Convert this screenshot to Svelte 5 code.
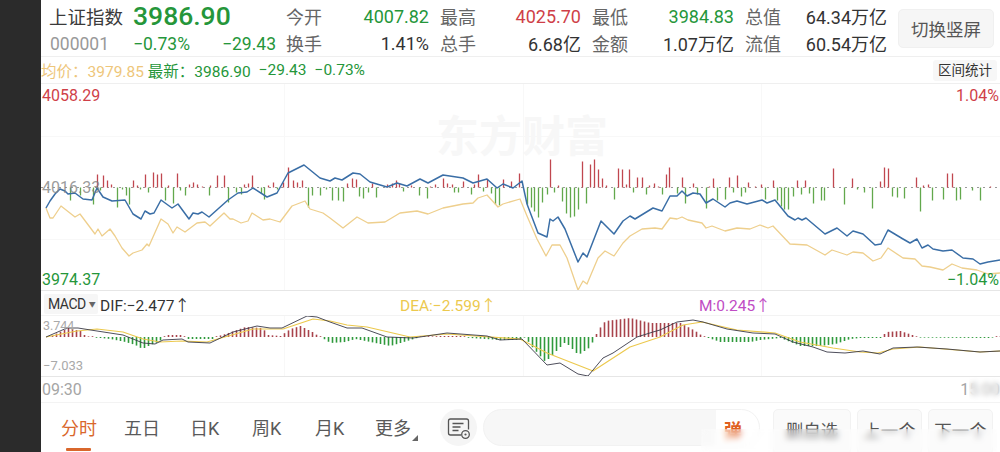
<script>
  // Index intraday screen: quote header, price/volume pane, MACD pane, bottom tabs.
  // Chart coordinates are page pixels; each svg viewBox maps them onto its pane.
  const stats = [
    ['今开', '4007.82', 'down', '最高', '4025.70', 'up', '最低', '3984.83', 'down', '总值', '64.34万亿', ''],
    ['换手', '1.41%', '', '总手', '6.68亿', '', '金额', '1.07万亿', '', '流值', '60.54万亿', '']
  ];

  const tabs = ['分时', '五日', '日K', '周K', '月K'];

  const priceLine = '46,207 50,200 55,193 60,188 65,190 68,193 75,192 83,198 92,199 97,187 103,196 112,200 125,199 133,213 141,218 145,210 150,213 154,212 161,199 172,207 178,203 189,218 193,212 198,213 202,211 209,216 228,199 238,192 247,191 253,187 267,196 277,192 288,172 304,164 320,177 330,180 335,177 342,179 353,172 360,173 370,181 387,186 397,182 407,185 420,178 428,182 443,174 463,177 473,182 487,178 497,187 503,183 513,187 522,180 527,203 538,232 547,236 550,218 553,220 558,216 565,228 578,261 583,252 587,256 601,220 614,233 623,220 630,215 635,218 653,207 662,210 670,195 677,195 682,190 687,195 693,192 700,193 706,202 713,198 725,206 730,202 737,200 747,203 762,199 767,202 775,199 788,215 795,219 798,217 802,219 806,217 825,233 837,227 847,235 853,230 863,233 875,244 881,243 888,229 903,238 910,242 917,238 922,247 928,244 933,248 943,250 952,249 963,257 973,258 980,263 988,261 1000,259';
  const avgLine = '46,207 50,217 53,217 61,205 75,216 80,213 95,233 98,228 102,235 110,228 115,235 122,247 129,255 133,252 142,249 147,243 149,245 161,218 168,223 173,232 177,226 185,231 197,222 205,221 210,225 224,212 230,218 233,218 241,222 248,220 252,212 263,219 270,218 280,221 292,205 305,200 310,208 323,212 330,217 343,227 357,216 368,222 385,221 400,212 417,210 428,213 443,207 463,203 473,202 478,197 487,194 498,206 503,203 520,198 527,215 537,238 546,255 552,244 560,244 567,257 578,289 583,280 587,283 598,257 605,250 614,255 623,242 630,235 642,228 655,227 662,228 670,217 677,218 682,216 688,219 702,222 706,227 712,225 725,230 737,227 750,228 760,224 768,227 773,225 790,243 807,244 825,254 832,249 847,254 853,251 863,252 873,260 881,257 888,247 903,257 915,258 922,265 930,266 943,269 952,263 962,267 977,269 988,273 1000,272';

  // [x, height]: positive bars are red and rise from the base line, negative are green.
  const volume = [[97,13],[103,12],[107,7],[111,3],[133,7],[137,2],[145,13],[153,15],[157,13],[161,14],[168,2],[177,14],[189,3],[193,5],[197,3],[202,1],[210,2],[217,12],[224,12],[244,3],[248,4],[252,12],[268,2],[273,5],[283,5],[288,20],[293,7],[297,5],[302,7],[70,-13],[80,-8],[93,-17],[100,-3],[117,-20],[122,-2],[126,-8],[129,-17],[140,-2],[148,-5],[165,-13],[173,-16],[180,-3],[185,-8],[209,-8],[228,-15],[236,-5],[241,-7],[261,-6],[264,-12],[277,-2],[308,-20],[312,-8],[320,-8],[326,-2],[332,-13],[338,-13],[347,4],[352,9],[356,8],[372,4],[387,3],[392,4],[396,7],[399,4],[411,2],[430,1],[435,3],[443,9],[447,4],[452,3],[463,6],[474,3],[478,13],[487,8],[503,8],[511,6],[519,14],[550,28],[558,2],[582,26],[590,23],[594,28],[598,18],[602,9],[606,2],[618,19],[622,18],[626,3],[629,18],[637,10],[642,10],[649,2],[654,4],[658,1],[666,13],[669,20],[343,-14],[359,-9],[363,-11],[368,-5],[376,-10],[403,-4],[419,-8],[427,-11],[454,-5],[458,-5],[471,-7],[483,-4],[491,-6],[495,-17],[499,-18],[527,-17],[531,-20],[534,-24],[538,-30],[542,-15],[547,-7],[554,-5],[562,-14],[566,-26],[570,-30],[574,-29],[578,-22],[586,-16],[614,-12],[633,-5],[646,-7],[662,-7],[682,10],[693,4],[709,1],[713,9],[729,10],[737,12],[748,5],[755,1],[761,3],[773,7],[797,7],[805,7],[833,19],[852,9],[880,6],[884,20],[888,19],[916,10],[923,2],[928,3],[947,14],[952,14],[990,1],[677,-6],[685,-16],[697,-7],[706,-21],[717,-13],[725,-12],[733,-5],[741,-9],[745,-5],[765,-12],[777,-13],[781,-19],[784,-22],[788,-22],[793,-9],[801,-7],[809,-6],[813,-16],[821,-13],[824,-13],[844,-17],[857,-2],[864,-5],[872,-21],[892,-9],[897,-10],[904,-11],[920,-24],[932,-13],[943,-12],[956,-13],[960,-12],[972,-3],[980,-13]];
  const volumeBase = 186.5;

  const difLine = '46,337 67,328 78,328 97,331 123,335 143,343 155,344 163,340 182,339 188,342 210,343 233,332 257,326 270,328 282,328 307,316 317,317 330,322 347,328 362,328 387,337 413,338 447,333 487,336 500,340 522,339 547,365 560,363 578,374 588,376 603,358 613,353 637,337 653,332 660,330 677,322 693,320 703,322 727,329 753,333 775,334 793,342 813,347 827,352 845,353 863,351 880,354 893,348 917,347 947,349 980,352 1000,351';
  const deaLine = '46,337 77,331 97,329 123,332 143,339 160,342 182,341 207,342 253,329 283,329 313,319 330,321 347,325 367,327 410,337 447,334 520,339 547,353 570,362 593,371 630,347 660,337 683,325 702,322 737,330 775,333 800,342 833,348 860,352 878,353 893,349 920,347 980,352 1000,351';

  // MACD histogram envelope, sampled every 4px below.
  const envelope = [[50,0],[55,3],[68,9],[80,6],[85,1],[100,-1],[110,-2],[125,-5],[135,-8],[142,-12],[150,-8],[158,-5],[163,-1],[165,2],[182,2],[186,-2],[212,-2],[218,1],[225,3],[245,10],[262,9],[268,2],[280,1],[290,8],[300,11],[312,5],[318,1],[322,-1],[330,-6],[345,-5],[355,-2],[370,-5],[390,-9],[410,-3],[420,0],[440,1],[462,1],[470,-1],[500,-3],[520,-3],[525,0],[530,-8],[545,-25],[552,-18],[565,-5],[572,-12],[578,-18],[590,-10],[594,-1],[598,7],[605,16],[630,19],[650,14],[680,14],[695,6],[702,1],[708,-1],[720,-5],[750,-5],[760,-3],[780,-1],[785,-3],[800,-9],[820,-9],[835,-7],[850,-2],[860,-1],[880,-1],[886,5],[900,6],[915,1],[920,-0.6],[990,-1],[1000,1]];
  const macdBase = 337;

  function sampleEnvelope() {
    const out = [];
    for (let x = 52; x <= 1000; x += 4) {
      let i = 0;
      while (i < envelope.length - 2 && envelope[i + 1][0] < x) i++;
      const [x0, v0] = envelope[i];
      const [x1, v1] = envelope[i + 1];
      const v = v0 + ((v1 - v0) * (x - x0)) / (x1 - x0);
      out.push([x, Math.abs(v) < 0.6 ? (v < 0 ? -0.8 : 0.8) : v]);
    }
    return out;
  }
  const histogram = sampleEnvelope();
</script>

<div class="shell">
  <div class="rail"></div>
  <div class="main">
    <header class="quote">
      <div class="name-block">
        <div class="name-row">
          <span class="name">上证指数</span>
          <span class="last down">3986.90</span>
        </div>
        <div class="code-row">
          <span class="code">000001</span>
          <span class="pct down">−0.73%</span>
          <span class="chg down">−29.43</span>
        </div>
      </div>
      <div class="stats">
        {#each stats as row}
          {#each [0, 3, 6, 9] as i}
            <span class="label">{row[i]}</span>
            <span class="value {row[i + 2]}">{row[i + 1]}</span>
          {/each}
        {/each}
      </div>
      <button class="switch" type="button">切换竖屏</button>
    </header>

    <div class="legend">
      <span class="avg">均价：3979.85</span>
      <span class="latest">最新：3986.90</span>
      <span class="latest">−29.43</span>
      <span class="latest">−0.73%</span>
      <span class="range">区间统计</span>
    </div>

    <section class="price-pane">
      <div class="watermark">东方财富</div>
      <svg viewBox="41 83 959 206" width="959" height="206" aria-hidden="true">
        <path class="grid" d="M41 135.5H1000M41 238.5H1000M284.5 83V289M523.5 83V289M761.5 83V289" />
        <path class="zero" d="M41 186.5H1000" />
        {#each volume as [x, h]}
          <line class={h > 0 ? 'bar-up' : 'bar-down'} x1={x + 0.5} x2={x + 0.5} y1={volumeBase} y2={volumeBase - h} />
        {/each}
        <polyline class="avg-line" points={avgLine} />
        <polyline class="price-line" points={priceLine} />
      </svg>
      <span class="tag top-left up">4058.29</span>
      <span class="tag mid-left">4016.33</span>
      <span class="tag bottom-left down">3974.37</span>
      <span class="tag top-right up">1.04%</span>
      <span class="tag bottom-right down">−1.04%</span>
    </section>

    <div class="macd-head">
      <span class="macd-select">MACD <i>▼</i></span>
      <span class="dif">DIF:−2.477↑</span>
      <span class="dea">DEA:−2.599↑</span>
      <span class="m">M:0.245↑</span>
    </div>

    <section class="macd-pane">
      <svg viewBox="41 316 959 60" width="959" height="60" aria-hidden="true">
        <path class="grid" d="M284.5 316V376M523.5 316V376M761.5 316V376" />
        {#each histogram as [x, v]}
          <line class={v > 0 ? 'hist-up' : 'hist-down'} x1={x + 0.5} x2={x + 0.5} y1={macdBase} y2={macdBase - v} />
        {/each}
        <polyline class="dea-line" points={deaLine} />
        <polyline class="dif-line" points={difLine} />
      </svg>
      <span class="tag macd-top">3.744</span>
      <span class="tag macd-bottom">−7.033</span>
    </section>

    <div class="time-axis">
      <span>09:30</span>
      <span>15:00</span>
      <div class="time-smear"></div>
    </div>

    <nav class="tabs">
      <div class="tab-list">
        <span class="tab active">分时</span>
        {#each tabs.slice(1) as tab}
          <span class="tab">{tab}</span>
        {/each}
        <span class="tab more">更多<b></b></span>
      </div>
      <div class="note-btn">
        <svg viewBox="0 0 37 37" width="37" height="37" aria-hidden="true">
          <path d="M21 26H10.500a2 2 0 0 1-2-2V12a2 2 0 0 1 2-2H26.500a2 2 0 0 1 2 2v8.500" />
          <path d="M12.500 14.500h11M12.500 18h8M12.500 21.500h6" />
          <circle cx="25.500" cy="25.500" r="3.800" />
          <circle class="dot" cx="25.500" cy="25.500" r="1.100" />
        </svg>
      </div>
      <div class="comment">
        <div class="danmu">弹</div>
      </div>
      <div class="actions">
        <button type="button" class="del">删自选</button>
        <button type="button">上一个</button>
        <button type="button">下一个</button>
      </div>
      <div class="bottom-smear"></div>
    </nav>
  </div>
</div>

<style>
  :global(body) {
    margin: 0;
    background: #fff;
  }

  .shell {
    display: flex;
    width: 1000px;
    height: 452px;
    overflow: hidden;
    font-family: Roboto, "Noto Sans CJK SC", sans-serif;
    color: #333;
  }

  .rail {
    flex: 0 0 41px;
    background: #2b2b2b;
  }

  .main {
    flex: 1;
    min-width: 0;
    display: flex;
    flex-direction: column;
  }

  .up { color: #cf3f48; }
  .down { color: #25963a; }

  /* quote header */
  .quote {
    flex: 0 0 56px;
    box-sizing: border-box;
    display: flex;
    border-bottom: 1px solid #efefef;
    padding-left: 8px;
  }

  .name-block {
    flex: 0 0 228px;
    display: flex;
    flex-direction: column;
  }

  .name-row {
    height: 32px;
    display: flex;
    align-items: center;
    gap: 10px;
  }

  .name {
    font-size: 18.500px;
    color: #3a3a3a;
  }

  .last {
    font-size: 26.500px;
    font-weight: 500;
    line-height: 32px;
  }

  .code-row {
    height: 24px;
    display: flex;
    align-items: center;
    font-size: 17.500px;
  }

  .code {
    width: 84px;
    color: #999;
    padding-left: 1px;
    box-sizing: border-box;
  }

  .pct { width: 84px; }

  .chg {
    width: 59px;
    text-align: right;
  }

  .stats {
    flex: 0 0 602px;
    margin-left: 9px;
    display: grid;
    grid-template-columns: 36px 96px 36px 94px 36px 95px 36px 95px;
    grid-template-rows: 32px 22px;
    column-gap: 11px;
    align-items: center;
    font-size: 18px;
  }

  .label {
    color: #666;
    font-size: 18px;
    white-space: nowrap;
  }

  .value {
    text-align: right;
    white-space: nowrap;
  }

  .switch {
    margin: 9px 0 0 10px;
    width: 96px;
    height: 39px;
    border: 1px solid #f0f0f0;
    border-radius: 5px;
    background: #f6f6f6;
    color: #555;
    font: inherit;
    font-size: 17.500px;
    padding: 0;
  }

  /* average / latest legend */
  .legend {
    flex: 0 0 27px;
    box-sizing: border-box;
    display: flex;
    align-items: center;
    gap: 8px;
    font-size: 15.500px;
    border-bottom: 1px solid #efefef;
  }

  .avg { color: #eec67a; margin-right: -4px; white-space: nowrap; }
  .latest { color: #25963a; white-space: nowrap; }

  .range {
    margin-left: auto;
    margin-right: 3px;
    padding: 0 5px;
    height: 21px;
    line-height: 21px;
    background: #f7f7f7;
    border-radius: 3px;
    color: #333;
    font-size: 13.500px;
  }

  /* chart panes */
  .price-pane,
  .macd-pane {
    position: relative;
    flex: none;
  }

  .price-pane {
    height: 206px;
    border-bottom: 1px solid #e6e6e6;
  }

  .price-pane svg,
  .macd-pane svg {
    display: block;
  }

  .grid {
    stroke: #f8f8f8;
    fill: none;
  }

  .zero {
    stroke: #999;
    stroke-dasharray: 2 4;
    fill: none;
  }

  .bar-up { stroke: #c0474f; stroke-width: 1.300; }
  .bar-down { stroke: #62a84c; stroke-width: 1.300; }
  .hist-up { stroke: #a8434c; stroke-width: 1.600; }
  .hist-down { stroke: #2f9a3c; stroke-width: 1.600; }

  .price-line,
  .avg-line,
  .dif-line,
  .dea-line {
    fill: none;
    stroke-linejoin: round;
  }

  .price-line { stroke: #3a6ea6; stroke-width: 1.500; }
  .avg-line { stroke: #eecf8d; stroke-width: 1.300; }
  .dif-line { stroke: #3a3a48; stroke-width: 0.900; }
  .dea-line { stroke: #ecc94e; stroke-width: 1.200; }

  .watermark {
    position: absolute;
    left: 395px;
    top: 28px;
    font-size: 43px;
    line-height: 50px;
    font-weight: 700;
    color: #f7f7f7;
    white-space: nowrap;
  }

  .tag {
    position: absolute;
    font-size: 16px;
    line-height: 20px;
  }

  .top-left { left: 1px; top: 2px; }
  .mid-left { left: 1px; top: 94px; color: rgba(130, 130, 130, 0.8); }
  .bottom-left { left: 1px; top: 186px; }
  .top-right { right: 1px; top: 2px; }
  .bottom-right { right: 1px; top: 186px; }

  .macd-head {
    flex: 0 0 25px;
    display: flex;
    align-items: center;
    font-size: 15.500px;
    color: #333;
    position: relative;
    white-space: nowrap;
  }

  .macd-select {
    flex: 0 0 54px;
    box-sizing: border-box;
    margin-left: 3px;
    height: 20px;
    line-height: 20px;
    padding-left: 4px;
    background: #f6f6f6;
    border-radius: 2px;
    font-size: 14px;
    letter-spacing: -0.500px;
  }

  .macd-select i {
    font-style: normal;
    font-size: 7px;
    color: #666;
    vertical-align: 2px;
  }

  .dif { margin-left: 2px; width: 300px; }
  .dea { color: #ecc94e; width: 299px; }
  .m { color: #c04cc4; }

  .macd-pane {
    height: 60px;
    border-top: 1px solid #f3f3f3;
    border-bottom: 1px solid #e6e6e6;
    margin-top: -1px;
  }

  .macd-top {
    left: 2px;
    top: 3px;
    font-size: 12.500px;
    color: #a9a9a9;
    line-height: 14px;
  }

  .macd-bottom {
    left: 2px;
    top: 42px;
    font-size: 13px;
    color: #a9a9a9;
    line-height: 16px;
  }

  .time-axis {
    position: relative;
    flex: 0 0 25px;
    display: flex;
    justify-content: space-between;
    align-items: center;
    padding: 0 0 0 1px;
    font-size: 16px;
    color: #a5a5a5;
    border-bottom: 1px solid #f3f3f3;
  }

  .time-smear {
    position: absolute;
    right: 0;
    top: 0;
    bottom: 1px;
    width: 31px;
    backdrop-filter: blur(2.500px);
    background: rgba(255, 255, 255, 0.2);
  }

  /* bottom tabs */
  .tabs {
    position: relative;
    flex: 1;
    display: flex;
    align-items: flex-start;
    padding-top: 6px;
    min-height: 0;
  }

  .tab-list {
    flex: 0 0 399px;
    display: grid;
    grid-template-columns: 63px 66px 62px 63px 60px auto;
    height: 46px;
    font-size: 18px;
    color: #5a5a5a;
    padding-left: 20px;
    box-sizing: border-box;
  }

  .tab {
    position: relative;
    line-height: 40px;
    white-space: nowrap;
  }

  .tab.active { color: #d9672c; }

  .tab.active::after {
    content: "";
    position: absolute;
    left: 5px;
    top: 39px;
    width: 25px;
    height: 3px;
    background: #d9672c;
    border-radius: 1px;
  }

  .tab.more b {
    position: absolute;
    left: 37px;
    top: 26px;
    border-left: 6px solid transparent;
    border-bottom: 6px solid #666;
  }

  .note-btn {
    flex: 0 0 37px;
    height: 37px;
    border-radius: 50%;
    background: #f5f5f5;
  }

  .note-btn svg {
    display: block;
  }

  .note-btn path,
  .note-btn circle {
    fill: none;
    stroke: #555;
    stroke-width: 1.300;
  }

  .note-btn .dot {
    fill: #555;
    stroke: none;
  }

  .comment {
    flex: 0 0 277px;
    margin-left: 6px;
    height: 37px;
    box-sizing: border-box;
    background: linear-gradient(90deg, #f7f7f7 232px, #fff 232px);
    border: 1px solid #f2f2f2;
    border-radius: 19px;
    display: flex;
    justify-content: flex-end;
  }

  .danmu {
    width: 44px;
    line-height: 41px;
    padding-right: 8px;
    box-sizing: border-box;
    text-align: center;
    font-size: 18px;
    font-weight: 700;
    color: #e0601f;
  }

  .actions {
    display: flex;
    gap: 6px;
    margin-left: 13px;
  }

  .actions button {
    width: 65px;
    height: 46px;
    border: 1px solid #f2f2f2;
    border-radius: 5px;
    background: #fafafa;
    color: #555;
    font: inherit;
    font-size: 17.500px;
    padding: 0 0 6px;
  }

  .actions .del { width: 78px; }

  /* the source screenshot fades out into a blur along its bottom edge */
  .bottom-smear {
    position: absolute;
    right: 0;
    top: 26px;
    bottom: 0;
    left: 660px;
    backdrop-filter: blur(3px);
    background: rgba(255, 255, 255, 0.25);
  }
</style>
